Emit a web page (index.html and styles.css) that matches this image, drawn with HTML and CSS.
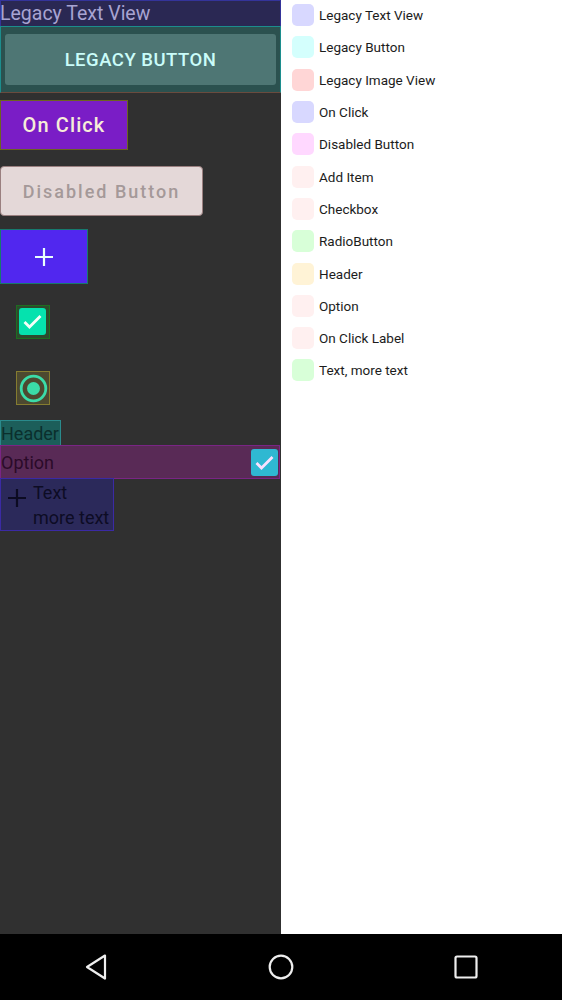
FILE: index.html
```html
<!DOCTYPE html>
<html>
<head>
<meta charset="utf-8">
<link rel="stylesheet" href="styles.css">
</head>
<body>
<div class="screen">
  <div class="left">
    <div class="ltv">Legacy Text View</div>
    <div class="lbwrap"><div class="lbtn">LEGACY BUTTON</div></div>
    <div class="onclick">On Click</div>
    <div class="disabled">Disabled Button</div>
    <div class="plusbtn">
      <svg width="22" height="22" viewBox="0 0 22 22"><path d="M11 2v18M2 11h18" stroke="#e8fffc" stroke-width="2.2"/></svg>
    </div>
    <div class="cbwrap">
      <svg width="27" height="27" viewBox="0 0 27 27"><rect x="0" y="0" width="27" height="27" rx="3" fill="#05e2ae"/><path d="M5.5 14l5 5 11-11" fill="none" stroke="#f4fff8" stroke-width="2.8"/></svg>
    </div>
    <div class="rbwrap">
      <svg width="31" height="31" viewBox="0 0 31 31"><circle cx="15.5" cy="15.5" r="12.3" fill="none" stroke="#3bdca8" stroke-width="2.8"/><circle cx="15.5" cy="15.5" r="6.5" fill="#3bdca8"/></svg>
    </div>
    <div class="header">Header</div>
    <div class="option">
      <span>Option</span>
      <div class="optcb">
        <svg width="27" height="27" viewBox="0 0 27 27"><rect x="0" y="0" width="27" height="27" rx="3" fill="#2fb8d2"/><path d="M5.5 14l5 5 11-11" fill="none" stroke="#fbe0ff" stroke-width="2.8"/></svg>
      </div>
    </div>
    <div class="textrow">
      <svg class="tplus" width="20" height="20" viewBox="0 0 20 20"><path d="M10 1v18M1 10h18" stroke="#0c0b22" stroke-width="2.2"/></svg>
      <div class="tlines"><div>Text</div><div>more text</div></div>
    </div>
  </div>
  <div class="right">
    <div class="item"><span class="sw c1"></span>Legacy Text View</div>
    <div class="item"><span class="sw c2"></span>Legacy Button</div>
    <div class="item"><span class="sw c3"></span>Legacy Image View</div>
    <div class="item"><span class="sw c1"></span>On Click</div>
    <div class="item"><span class="sw c5"></span>Disabled Button</div>
    <div class="item"><span class="sw c6"></span>Add Item</div>
    <div class="item"><span class="sw c6"></span>Checkbox</div>
    <div class="item"><span class="sw c8"></span>RadioButton</div>
    <div class="item"><span class="sw c9"></span>Header</div>
    <div class="item"><span class="sw c6"></span>Option</div>
    <div class="item"><span class="sw c6"></span>On Click Label</div>
    <div class="item"><span class="sw c8"></span>Text, more text</div>
  </div>
</div>
<div class="nav">
  <svg width="24" height="28" viewBox="0 0 24 28"><path d="M21 2.5L3 14l18 11.5z" fill="none" stroke="#eee" stroke-width="2.2" stroke-linejoin="round"/></svg>
  <svg width="26" height="26" viewBox="0 0 26 26"><circle cx="13" cy="13" r="11.3" fill="none" stroke="#eee" stroke-width="2.2"/></svg>
  <svg width="24" height="24" viewBox="0 0 24 24"><rect x="1.5" y="1.5" width="21" height="21" rx="1.5" fill="none" stroke="#eee" stroke-width="2.2"/></svg>
</div>
</body>
</html>
```

FILE: styles.css
```css
* { box-sizing: border-box; }
html, body { margin: 0; padding: 0; }
body { font-family: Roboto, "Liberation Sans", sans-serif; width: 562px; height: 1000px; overflow: hidden; background: #fff; }
.screen { display: flex; height: 934px; }
.left { width: 281px; background: #303030; display: flex; flex-direction: column; align-items: flex-start; }
.ltv { width: 281px; height: 26px; background: #2a2853; border: 1px solid #34349a; border-bottom: none; color: #a8a4d2; font-size: 19.5px; line-height: 26px; text-indent: -1px; white-space: nowrap; }
.lbwrap { width: 281px; height: 67px; background: #2b514f; border: 1px solid #1c8d8d; border-bottom-color: #6a4b3e; padding: 7px 4px 7px 4px; }
.lbtn { height: 51px; background: #4e7674; border-radius: 3px; color: #cafcf9; font-size: 18.5px; font-weight: 500; display: flex; align-items: center; justify-content: center; letter-spacing: 0.5px; }
.onclick { margin-top: 7px; width: 128px; height: 50px; background: #7a1dc6; border: 1px solid #6c6420; color: #f7edd8; font-size: 20px; font-weight: 500; letter-spacing: 1.1px; display: flex; align-items: center; justify-content: center; }
.disabled { margin-top: 16px; width: 203px; height: 50px; background: #e4d8d8; border: 1px solid #9a7f7f; border-radius: 4px; color: #a49999; font-size: 18px; font-weight: 500; letter-spacing: 2px; display: flex; align-items: center; justify-content: center; }
.plusbtn { margin-top: 13px; width: 88px; height: 55px; background: #5127ef; border: 1px solid #177a6e; display: flex; align-items: center; justify-content: center; }
.plusbtn svg { display: block; }
.cbwrap { margin-top: 21px; margin-left: 16px; width: 34px; height: 34px; background: #2d4a2d; border: 1px solid #1d6e1f; padding: 2px; }
.cbwrap svg, .rbwrap svg, .optcb svg { display: block; }
.rbwrap { margin-top: 32px; margin-left: 16px; width: 34px; height: 34px; background: #4d4930; border: 1px solid #857c30; padding: 0.5px; }
.header { margin-top: 15px; height: 26px; width: 61px; background: #1c5e5a; border: 1px solid #2a8a8c; color: #0b2f2d; font-size: 18px; line-height: 26px; white-space: nowrap; }
.option { width: 280px; height: 34px; background: #592a56; border: 1px solid #7a2585; display: flex; align-items: center; justify-content: space-between; color: #2b0a29; font-size: 18px; padding-right: 1px; margin-top: -1px; }
.optcb { width: 27px; height: 27px; }
.textrow { margin-top: -1px; width: 114px; height: 53px; background: #2b295a; border: 1px solid #3b2aa4; display: flex; align-items: flex-start; color: #0d0c24; font-size: 18px; }
.tplus { margin: 9px 0 0 6px; flex: none; }
.tlines { margin-left: 6px; line-height: 25px; margin-top: 1px; }
.right { flex: 1; background: #fff; padding-top: 0; margin-top: -1px; }
.item { height: 32.3px; display: flex; align-items: center; margin-left: 11px; font-size: 13.5px; color: #1c1c1c; }
.sw { width: 22px; height: 22px; border-radius: 5px; margin-right: 5px; flex: none; }
.c1 { background: #d8d8ff; }
.c2 { background: #d4fffd; }
.c3 { background: #ffd6d6; }
.c5 { background: #ffd8ff; }
.c6 { background: #fff0f0; }
.c8 { background: #d8ffd8; }
.c9 { background: #fff3d6; }
.nav { height: 66px; background: #000; display: flex; align-items: center; justify-content: center; gap: 160px; }
.nav svg { display: block; }
```
